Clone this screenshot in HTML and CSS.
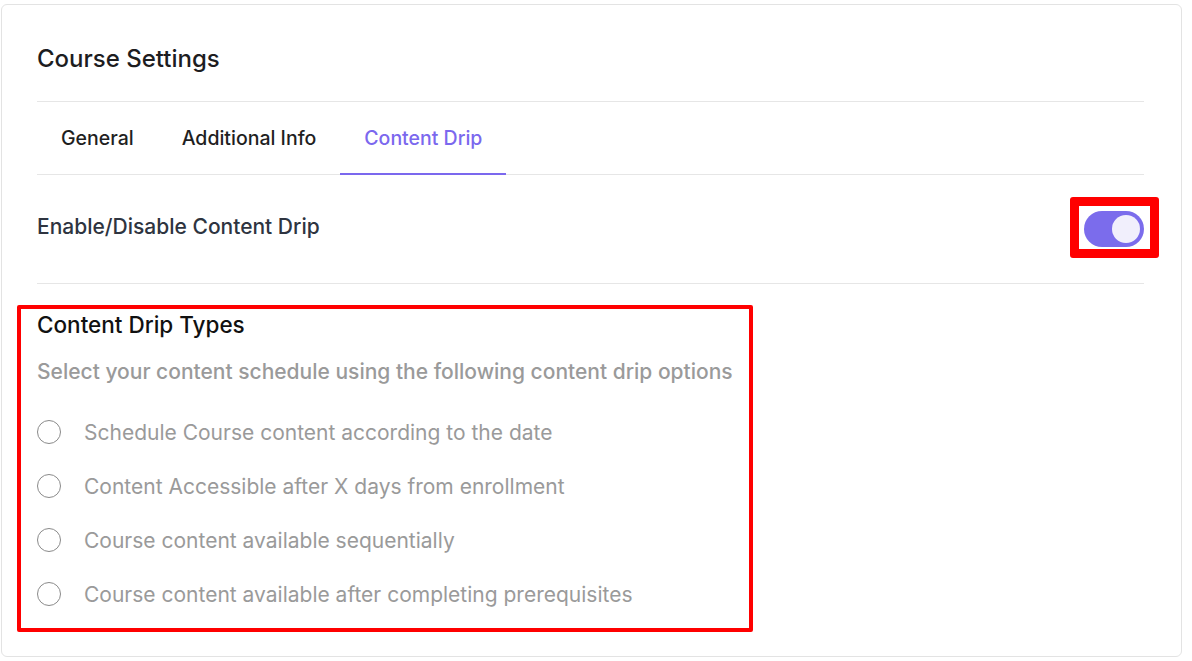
FILE: index.html
```html
<!DOCTYPE html>
<html lang="en">
<head>
<meta charset="utf-8">
<title>Course Settings</title>
<link rel="stylesheet" href="styles.css">
</head>
<body>
<div class="card">
  <h1 class="title">Course Settings</h1>
  <nav class="tabs">
    <a class="tab">General</a>
    <a class="tab">Additional Info</a>
    <a class="tab active">Content Drip</a>
  </nav>
  <div class="toggle-row">
    <span class="toggle-label">Enable/Disable Content Drip</span>
    <span class="toggle-wrap">
      <span class="toggle"><span class="knob"></span></span>
    </span>
  </div>
  <section class="drip">
    <h2 class="drip-title">Content Drip Types</h2>
    <p class="drip-desc">Select your content schedule using the following content drip options</p>
    <label class="option"><span class="radio"></span>Schedule Course content according to the date</label>
    <label class="option"><span class="radio"></span>Content Accessible after X days from enrollment</label>
    <label class="option"><span class="radio"></span>Course content available sequentially</label>
    <label class="option"><span class="radio"></span>Course content available after completing prerequisites</label>
  </section>
</div>
</body>
</html>
```
FILE: styles.css
```css
*, *::before, *::after { box-sizing: border-box; }
body {
  margin: 0;
  padding: 4px 10px 4px 1px;
  background: #fff;
  font-family: Inter, "Noto Sans", sans-serif;
}
.card {
  border: 1px solid #e3e3e3;
  border-radius: 6px;
  padding: 0 37px 35px 35px;
  background: #fff;
}
.title {
  margin: 0;
  padding: 40px 0 28px;
  font-size: 24px;
  line-height: 28px;
  font-weight: 500;
  color: #1d1d1f;
  border-bottom: 1px solid #e6e6e6;
}
.tabs {
  display: flex;
  border-bottom: 1px solid #e6e6e6;
}
.tab {
  display: block;
  height: 73px;
  margin-bottom: -1px;
  padding: 2px 24px 0;
  line-height: 69px;
  font-size: 19.5px;
  font-weight: 500;
  color: #1f1f1f;
  border-bottom: 2px solid transparent;
}
.tab.active {
  color: #7b68ee;
  border-bottom-color: #7b68ee;
}
.toggle-row {
  display: flex;
  align-items: center;
  justify-content: space-between;
  height: 109px;
  border-bottom: 1px solid #e6e6e6;
}
.toggle-label {
  font-size: 21px;
  font-weight: 500;
  color: #2e3440;
  margin-top: -6px;
}
.toggle-wrap {
  position: relative;
  display: flex;
}
.toggle-wrap::after {
  content: "";
  position: absolute;
  left: -14px;
  top: -14px;
  right: -15px;
  bottom: -11px;
  border: 9px solid #ff0000;
  border-radius: 3px;
}
.toggle {
  display: flex;
  align-items: center;
  justify-content: flex-end;
  width: 60px;
  height: 36px;
  padding: 0 4px;
  border-radius: 18px;
  background: #7b6cec;
}
.knob {
  width: 28px;
  height: 28px;
  border-radius: 50%;
  background: #f1effc;
}
.drip {
  position: relative;
  padding-top: 27px;
}
.drip::before {
  content: "";
  position: absolute;
  left: -20px;
  top: 21px;
  width: 736px;
  height: 327px;
  border: 4px solid #ff0000;
  border-radius: 2px;
}
.drip-title {
  margin: 0;
  font-size: 22.5px;
  line-height: 28px;
  font-weight: 500;
  color: #111;
}
.drip-desc {
  margin: 20px 0 20px;
  font-size: 21px;
  line-height: 26px;
  font-weight: 500;
  color: #9a9a9a;
}
.option {
  display: flex;
  align-items: center;
  height: 54px;
  font-size: 21px;
  color: #9a9a9a;
}
.radio {
  width: 24px;
  height: 24px;
  margin-right: 23px;
  border: 1px solid #8a8a8a;
  border-radius: 50%;
  flex: none;
}
```
